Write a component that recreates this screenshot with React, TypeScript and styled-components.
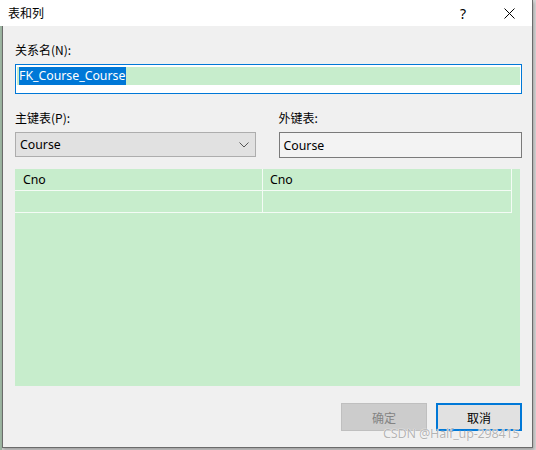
import styled, { createGlobalStyle } from 'styled-components';

const GlobalStyle = createGlobalStyle`
  html, body {
    margin: 0;
    padding: 0;
    background: #d6d6d6;
  }
  body {
    width: 536px;
    height: 450px;
    overflow: hidden;
    font-family: "Noto Sans", "Noto Sans CJK SC", sans-serif;
    font-size: 12px;
    color: #000;
  }
`;

const Page = styled.div`
  position: relative;
  width: 536px;
  height: 450px;
  padding-left: 2px;
  box-sizing: border-box;
  background: linear-gradient(90deg, #9fb8a4 0 2px, #d6d6d6 2px);
`;

const Window = styled.div`
  width: 531px;
  height: 448px;
  box-sizing: border-box;
  border: 1px solid #6b6b6b;
  border-top: none;
  background: #f0f0f0;
  display: flex;
  flex-direction: column;
  box-shadow: 1px 2px 3px rgba(0, 0, 0, 0.25);
`;

const TitleBar = styled.div`
  height: 26px;
  flex: none;
  background: #fff;
  display: flex;
  align-items: center;
  margin-left: -3px;
  padding-left: 8px;
`;

const Title = styled.span`
  flex: 1;
  font-size: 12px;
  font-family: "Noto Sans CJK SC", sans-serif;
  line-height: 1;
`;

const CaptionButton = styled.div`
  width: 46px;
  height: 26px;
  display: flex;
  align-items: center;
  justify-content: center;
  font-size: 14px;
  font-family: "Noto Sans", sans-serif;
`;

const Body = styled.div`
  flex: 1;
  display: flex;
  flex-direction: column;
  padding: 15px 10px 0 12px;
`;

const Label = styled.div`
  font-family: "Noto Sans CJK SC", sans-serif;
  font-size: 12px;
  line-height: 17px;
  height: 17px;
  margin-bottom: 6px;
  color: #000;
`;

const NameBox = styled.div`
  height: 30px;
  box-sizing: border-box;
  border: 1px solid #0078d7;
  background: #fff;
  padding: 2px 1px 0 1px;
`;

const NameLine = styled.div`
  height: 18px;
  background: #c7edcc;
  padding-left: 2px;
  display: flex;
  align-items: center;
`;

const Selected = styled.span`
  background: #0078d7;
  color: #fff;
  font-size: 12.3px;
  line-height: 18px;
  height: 18px;
  padding-right: 1px;
`;

const TableRow = styled.div`
  display: flex;
  margin-top: 15px;
  gap: 23px;
`;

const Field = styled.div<{ $width: number }>`
  width: ${({ $width }) => $width}px;
  display: flex;
  flex-direction: column;
`;

const Combo = styled.div`
  height: 25px;
  box-sizing: border-box;
  border: 1px solid #adadad;
  background: #e1e1e1;
  display: flex;
  align-items: center;
  justify-content: space-between;
  padding: 0 6px 0 4px;
  font-size: 12.3px;
`;

const ReadOnlyBox = styled.div`
  height: 26px;
  box-sizing: border-box;
  border: 1px solid #7a7a7a;
  background: #f3f3f3;
  display: flex;
  align-items: center;
  padding-left: 4px;
  font-size: 12.3px;
`;

const Grid = styled.div`
  margin-top: 11px;
  width: 505px;
  height: 217px;
  background: #c7edcc;
`;

const GridRow = styled.div`
  display: grid;
  grid-template-columns: 248px 248px;
  width: 497px;
  height: 22px;
  box-sizing: border-box;
  border-bottom: 1px solid #f4fbf5;
  border-right: 1px solid #f4fbf5;
`;

const Cell = styled.div<{ $first?: boolean }>`
  display: flex;
  align-items: center;
  padding-left: ${({ $first }) => ($first ? '8px' : '7px')};
  border-right: ${({ $first }) => ($first ? '1px solid #f4fbf5' : 'none')};
  font-size: 12.3px;
`;

const Footer = styled.div`
  display: flex;
  justify-content: flex-end;
  gap: 9px;
  margin-top: 17px;
`;

const Button = styled.div<{ $disabled?: boolean; $default?: boolean }>`
  width: 86px;
  height: 28px;
  box-sizing: border-box;
  display: flex;
  align-items: center;
  justify-content: center;
  font-family: "Noto Sans CJK SC", sans-serif;
  font-size: 12px;
  background: ${({ $disabled }) => ($disabled ? '#cccccc' : '#e1e1e1')};
  color: ${({ $disabled }) => ($disabled ? '#838383' : '#000')};
  border: ${({ $disabled, $default }) =>
    $default ? '2px solid #0078d7' : $disabled ? '1px solid #bfbfbf' : '1px solid #adadad'};
`;

const Watermark = styled.div`
  position: absolute;
  left: 383px;
  top: 425px;
  font-family: "Noto Sans", sans-serif;
  font-size: 12.6px;
  letter-spacing: -0.2px;
  color: #b4b4b4;
  text-shadow: 0 0 1px #fff, 0 0 1px #fff;
  white-space: nowrap;
`;

export default function App() {
  return (
    <>
      <GlobalStyle />
      <Page>
        <Window>
          <TitleBar>
            <Title>表和列</Title>
            <CaptionButton>?</CaptionButton>
            <CaptionButton>
              <svg width="11" height="11" viewBox="0 0 11 11">
                <path d="M0.5 0.5 L10.5 10.5 M10.5 0.5 L0.5 10.5" stroke="#000" strokeWidth="1" fill="none" />
              </svg>
            </CaptionButton>
          </TitleBar>
          <Body>
            <Label>关系名(N):</Label>
            <NameBox>
              <NameLine>
                <Selected>FK_Course_Course</Selected>
              </NameLine>
            </NameBox>
            <TableRow>
              <Field $width={241}>
                <Label>主键表(P):</Label>
                <Combo>
                  <span>Course</span>
                  <svg width="10" height="6" viewBox="0 0 10 6">
                    <path d="M0.5 0.5 L5 5 L9.5 0.5" stroke="#555" strokeWidth="1" fill="none" />
                  </svg>
                </Combo>
              </Field>
              <Field $width={244}>
                <Label>外键表:</Label>
                <ReadOnlyBox>Course</ReadOnlyBox>
              </Field>
            </TableRow>
            <Grid>
              <GridRow>
                <Cell $first>Cno</Cell>
                <Cell>Cno</Cell>
              </GridRow>
              <GridRow>
                <Cell $first />
                <Cell />
              </GridRow>
            </Grid>
            <Footer>
              <Button $disabled>确定</Button>
              <Button $default>取消</Button>
            </Footer>
          </Body>
        </Window>
        <Watermark>CSDN @Half_up-298415</Watermark>
      </Page>
    </>
  );
}
